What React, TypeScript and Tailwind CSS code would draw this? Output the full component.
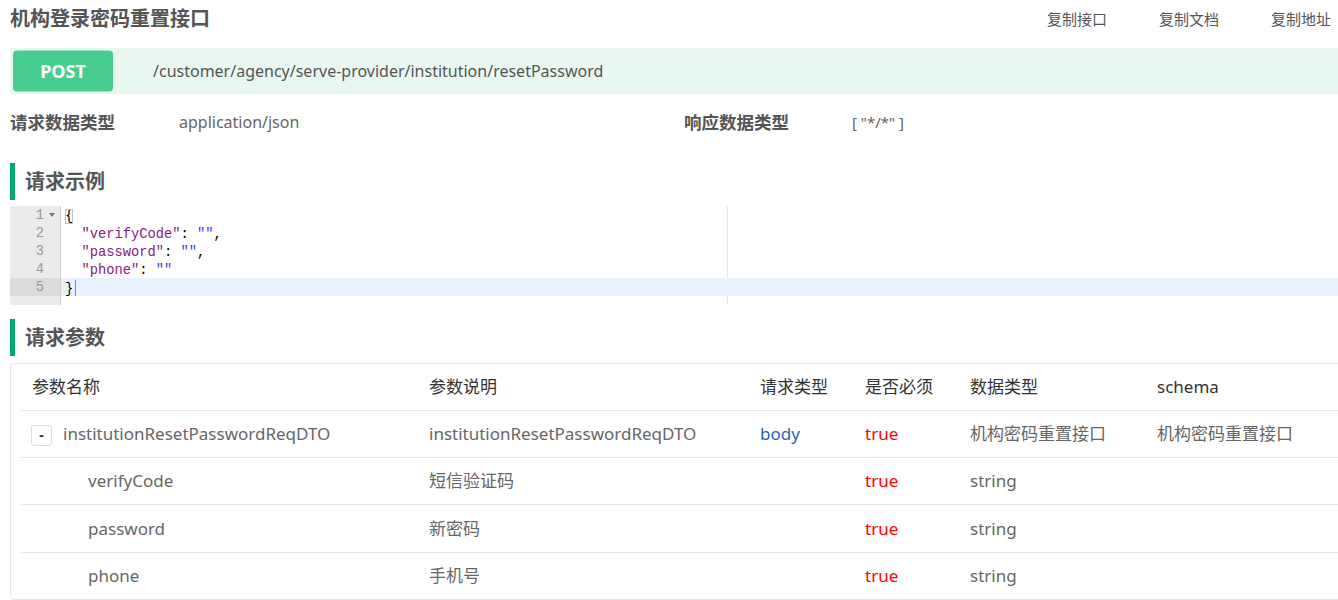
import React from "react";

interface Param {
  name: string;
  desc: string;
  in: string;
  required: boolean;
  type: string;
  schema: string;
  child?: boolean;
}

const params: Param[] = [
  {
    name: "institutionResetPasswordReqDTO",
    desc: "institutionResetPasswordReqDTO",
    in: "body",
    required: true,
    type: "机构密码重置接口",
    schema: "机构密码重置接口",
  },
  { name: "verifyCode", desc: "短信验证码", in: "", required: true, type: "string", schema: "", child: true },
  { name: "password", desc: "新密码", in: "", required: true, type: "string", schema: "", child: true },
  { name: "phone", desc: "手机号", in: "", required: true, type: "string", schema: "", child: true },
];

// row heights include the bottom border (border-box)
const rowHeights = ["h-[47px]", "h-[47px]", "h-[48px]", "h-[46px]"];

const SectionTitle: React.FC<{ title: string }> = ({ title }) => (
  <div className="flex h-[37px] items-center">
    <div className="h-full w-[5px] bg-[#05a86c]" />
    <h3 className="ml-[10px] text-[20px] font-bold text-[#555]">{title}</h3>
  </div>
);

const Key: React.FC<{ k: string }> = ({ k }) => <span className="text-[#881a7f]">"{k}"</span>;
const Str: React.FC = () => <span className="text-[#3a3af5]">""</span>;

const CodeEditor: React.FC = () => {
  const lines: React.ReactNode[] = [
    <span className="outline outline-1 -outline-offset-1 outline-[#c0c0c0]">{"{"}</span>,
    <>
      {"  "}
      <Key k="verifyCode" />: <Str />,
    </>,
    <>
      {"  "}
      <Key k="password" />: <Str />,
    </>,
    <>
      {"  "}
      <Key k="phone" />: <Str />
    </>,
    <>
      {"}"}
      <span className="ml-[2px] inline-block h-[16px] w-px bg-[#888] align-[-3px]" />
    </>,
  ];
  const active = 4;

  return (
    <div className="mt-[6px] flex h-[99px] w-[1348px] font-['Liberation_Mono','DejaVu_Sans_Mono',monospace] text-[13.75px] leading-[18px]">
      <div className="w-[51px] shrink-0 border-r border-[#cfcfcf] bg-[#ebebeb] text-[#999]">
        {lines.map((_, i) => (
          <div key={i} className={`flex h-[18px] items-center ${i === active ? "bg-[#dcdcdc]" : ""}`}>
            <span className="relative top-[1px] w-[34px] text-right">{i + 1}</span>
            {i === 0 && (
              <svg width="6" height="4" viewBox="0 0 6 4" className="ml-[5px]">
                <path d="M0 0 L6 0 L3 4 Z" fill="#777" />
              </svg>
            )}
          </div>
        ))}
      </div>
      <div className="relative flex-1 text-black">
        <div className="absolute top-0 bottom-0 left-[666px] w-px bg-[#e6e6e6]" />
        {lines.map((l, i) => (
          <div key={i} className={`relative h-[18px] whitespace-pre pl-[4px] ${i === active ? "bg-[#e8f2fe]" : ""}`}>
            <div className="relative top-[1.5px]">{l}</div>
          </div>
        ))}
      </div>
    </div>
  );
};

const cols = "grid grid-cols-[397px_331px_105px_105px_187px_1fr]";

const App: React.FC = () => {
  return (
    <div className="h-[600px] w-[1338px] overflow-hidden bg-white font-['Noto_Sans','Noto_Sans_CJK_SC',sans-serif] text-[#555]">
      <div className="flex h-[38px] items-center justify-between pl-[10px] pr-[7px]">
        <h2 className="text-[20px] font-bold text-[#555]">机构登录密码重置接口</h2>
        <div className="flex gap-[52px] text-[15px] text-[#555]">
          <span>复制接口</span>
          <span>复制文档</span>
          <span>复制地址</span>
        </div>
      </div>

      <div className="w-[1358px] pl-[10px]">
        <div className="mt-[10px] flex h-[46px] w-[1348px] items-center bg-[#e8f8f1] pl-[3px]">
          <div className="flex h-[41px] w-[100px] -translate-y-[0.5px] items-center justify-center rounded-[4px] bg-[#49cc90] text-[18px] font-bold text-white">
            POST
          </div>
          <span className="ml-[40px] text-[16px] text-[#555]">/customer/agency/serve-provider/institution/resetPassword</span>
        </div>

        <div className="grid h-[56px] grid-cols-[674px_674px] items-center">
          <div className="flex items-center">
            <span className="w-[169px] text-[17.5px] font-bold text-[#555]">请求数据类型</span>
            <span className="text-[16px] text-[#666]">application/json</span>
          </div>
          <div className="flex items-center">
            <span className="w-[168px] text-[17.5px] font-bold text-[#555]">响应数据类型</span>
            <span className="text-[15px] text-[#666]">[ "*/*" ]</span>
          </div>
        </div>

        <div className="mt-[13px]">
          <SectionTitle title="请求示例" />
        </div>
        <CodeEditor />

        <div className="mt-[14px]">
          <SectionTitle title="请求参数" />
        </div>

        <div className="mt-[7px] w-[1348px] rounded-[4px] border border-[#e6e6e6] pl-[10px] text-[17px]">
          <div className={`${cols} h-[47px] items-center border-b border-[#e6e6e6] text-[#333]`}>
            <span className="pl-[11px]">参数名称</span>
            <span className="pl-[11px]">参数说明</span>
            <span className="pl-[11px]">请求类型</span>
            <span className="pl-[11px]">是否必须</span>
            <span className="pl-[11px]">数据类型</span>
            <span className="pl-[11px]">schema</span>
          </div>
          {params.map((p, i) => (
            <div
              key={p.name}
              className={`${cols} items-center text-[#666] ${rowHeights[i]} ${
                i < params.length - 1 ? "border-b border-[#e6e6e6]" : ""
              }`}
            >
              {p.child ? (
                <span className="pl-[67px]">{p.name}</span>
              ) : (
                <div className="flex items-center pl-[10px]">
                  <button className="mr-[11px] flex h-[21px] w-[21px] translate-y-[1px] items-center justify-center rounded-[3px] border border-[#dcdcdc] bg-white text-[14px] font-bold leading-none text-[#333]">
                    -
                  </button>
                  <span>{p.name}</span>
                </div>
              )}
              <span className="pl-[11px]">{p.desc}</span>
              <span className="pl-[11px] text-[#1f62b5]">{p.in}</span>
              <span className="pl-[11px] text-[#ff0000]">{p.required ? "true" : "false"}</span>
              <span className="pl-[11px]">{p.type}</span>
              <span className="pl-[11px]">{p.schema}</span>
            </div>
          ))}
        </div>
      </div>
    </div>
  );
};

export default App;
